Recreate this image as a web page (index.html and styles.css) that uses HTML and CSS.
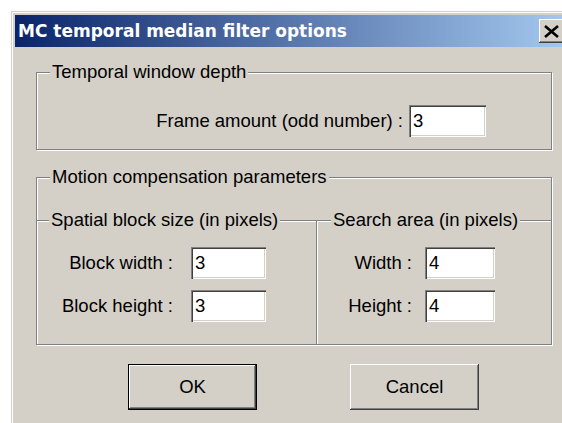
FILE: index.html
```html
<!DOCTYPE html>
<html lang="en">
<head>
<meta charset="utf-8">
<title>MC temporal median filter options</title>
<link rel="stylesheet" href="styles.css">
</head>
<body>
<div class="window">
  <div class="titlebar">
    <span class="title">MC temporal median filter options</span>
    <button class="close" type="button" aria-label="Close">
      <svg width="17" height="13" viewBox="0 0 17 13" aria-hidden="true">
        <path d="M2 1 L15 12 M15 1 L2 12" stroke="#000" stroke-width="2.6" fill="none"/>
      </svg>
    </button>
  </div>
  <form class="dialog">
    <fieldset class="group">
      <legend>Temporal window depth</legend>
      <div class="frame-row">
        <label for="frames">Frame amount (odd number) :</label>
        <input id="frames" class="field field-frames" type="text" value="3">
      </div>
    </fieldset>

    <fieldset class="group group-motion">
      <legend>Motion compensation parameters</legend>
      <div class="subgroups">
        <fieldset class="sub sub-block">
          <legend>Spatial block size (in pixels)</legend>
          <div class="pairs pairs-block">
            <label for="bw">Block width :</label>
            <input id="bw" class="field field-block" type="text" value="3">
            <label for="bh">Block height :</label>
            <input id="bh" class="field field-block" type="text" value="3">
          </div>
        </fieldset>
        <fieldset class="sub sub-search">
          <legend>Search area (in pixels)</legend>
          <div class="pairs pairs-search">
            <label for="sw">Width :</label>
            <input id="sw" class="field field-search" type="text" value="4">
            <label for="sh">Height :</label>
            <input id="sh" class="field field-search" type="text" value="4">
          </div>
        </fieldset>
      </div>
    </fieldset>

    <div class="actions">
      <button class="btn btn-default" type="submit">OK</button>
      <button class="btn" type="button">Cancel</button>
    </div>
  </form>
</div>
</body>
</html>
```

FILE: styles.css
```css
html, body {
  margin: 0;
  height: 100%;
}

body {
  background: #fff;
  overflow: hidden;
  font-family: "Liberation Sans", Arial, sans-serif;
  font-size: 18.5px;
  color: #000;
}

/* classic window frame */
.window {
  margin: 11px 0 0 11px;
  width: 565px;
  height: 440px;
  box-sizing: border-box;
  background: #d4d0c8;
  border-top: 1px solid #d4d0c8;
  border-left: 1px solid #d4d0c8;
  box-shadow: inset 1px 1px 0 #fff;
  padding: 3px;
}

.titlebar {
  height: 32px;
  display: flex;
  align-items: center;
  padding-left: 3px;
  background: linear-gradient(to right, #0a246a, #a6caf0);
}

.title {
  font-family: "DejaVu Sans", sans-serif;
  font-weight: bold;
  font-size: 17px;
  color: #fff;
  white-space: nowrap;
}

.close {
  margin-left: auto;
  margin-right: 6px;
  width: 28px;
  height: 24px;
  padding: 0;
  border: none;
  background: #d4d0c8;
  box-shadow: inset -1px -1px 0 #404040, inset 1px 1px 0 #fff,
              inset -2px -2px 0 #808080, inset 2px 2px 0 #d4d0c8;
  display: flex;
  align-items: center;
  justify-content: center;
}

.close svg {
  display: block;
  margin-left: -4px;
}

.dialog {
  margin: 0;
  padding: 13px 21px 0 21px;
}

/* etched group boxes */
.group {
  margin: 0;
  padding: 0;
  min-width: 0;
  border: 1px solid #808080;
  box-shadow: inset 1px 1px 0 #fff, 1px 1px 0 #fff;
}

.group legend,
.sub legend {
  margin-left: 13px;
  padding: 0 2px;
  line-height: 24px;
  white-space: nowrap;
  background: #d4d0c8;
}

.frame-row {
  display: flex;
  justify-content: flex-end;
  align-items: center;
  gap: 6px;
  padding-right: 65px;
  margin: 21px 0 12px;
}

.frame-row label {
  white-space: nowrap;
}

.group-motion {
  margin-top: 15px;
}

.subgroups {
  display: flex;
  margin-top: 19px;
}

.sub {
  margin: 0;
  padding: 0;
  min-width: 0;
  border: none;
  border-top: 1px solid #808080;
  box-shadow: inset 0 1px 0 #fff;
}

.sub-block {
  width: 280px;
  box-sizing: border-box;
  flex: none;
  border-right: 1px solid #808080;
  box-shadow: inset 0 1px 0 #fff, 1px 0 0 #fff;
}

.sub-block legend {
  margin-left: 12px;
}

.sub-search {
  flex: 1;
}

.sub-search legend {
  margin-left: 14px;
}

.pairs {
  display: grid;
  align-items: center;
  row-gap: 11px;
  margin-top: 15px;
  padding-bottom: 22px;
}

.pairs label {
  justify-self: end;
  white-space: nowrap;
}

.pairs-block {
  grid-template-columns: 136px 75px;
  column-gap: 18px;
}

.pairs-search {
  grid-template-columns: 95px 70px;
  column-gap: 13px;
}

/* sunken edit fields */
.field {
  box-sizing: border-box;
  height: 32px;
  margin: 0;
  padding: 0 4px;
  border: none;
  background: #fff;
  font: inherit;
  color: #000;
  box-shadow: inset 1px 1px 0 #808080, inset 2px 2px 0 #404040,
              inset -1px -1px 0 #fff, inset -2px -2px 0 #d4d0c8;
}

.field-frames {
  width: 77px;
}

.field-block {
  width: 75px;
}

.field-search {
  width: 70px;
}

.actions {
  display: flex;
  gap: 93px;
  padding-left: 92px;
  margin-top: 19px;
}

.btn {
  box-sizing: border-box;
  width: 129px;
  height: 46px;
  padding: 0;
  border: none;
  background: #d4d0c8;
  font: inherit;
  color: #000;
  box-shadow: inset -1px -1px 0 #404040, inset 1px 1px 0 #fff,
              inset -2px -2px 0 #808080, inset 2px 2px 0 #d4d0c8;
}

.btn-default {
  border: 1px solid #000;
}
```
